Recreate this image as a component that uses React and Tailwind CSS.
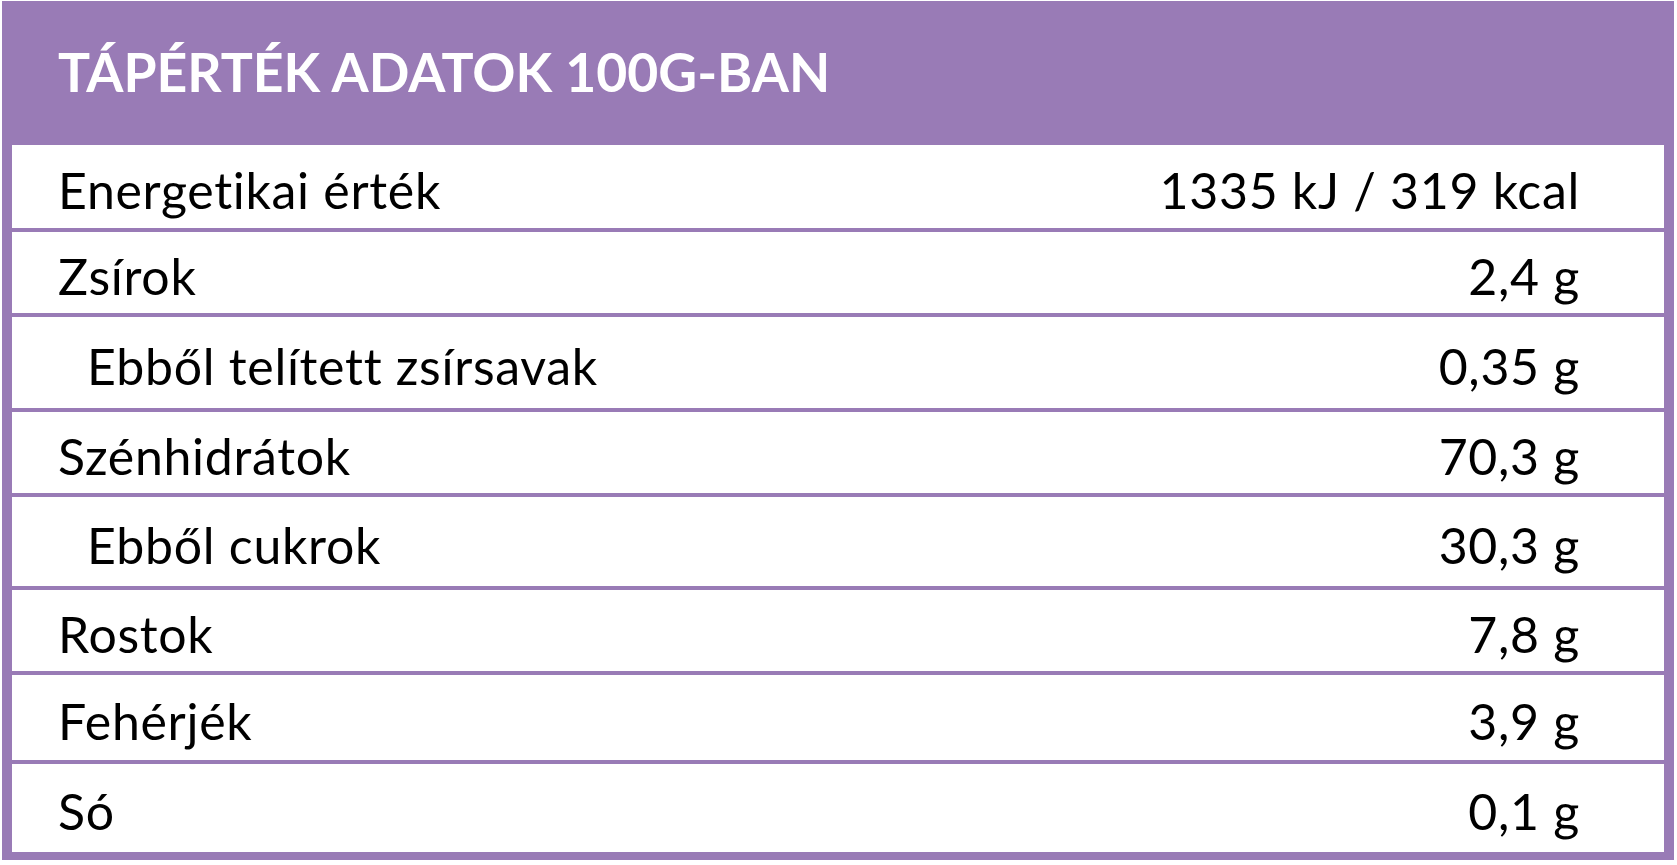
const rows = [
  { label: 'Energetikai érték', value: '1335 kJ / 319 kcal', h: 'h-[83px]' },
  { label: 'Zsírok', value: '2,4 g', h: 'h-[85px] border-t-4' },
  { label: 'Ebből telített zsírsavak', value: '0,35 g', h: 'h-[95px] border-t-4', sub: true },
  { label: 'Szénhidrátok', value: '70,3 g', h: 'h-[85px] border-t-4' },
  { label: 'Ebből cukrok', value: '30,3 g', h: 'h-[93px] border-t-4', sub: true },
  { label: 'Rostok', value: '7,8 g', h: 'h-[85px] border-t-4' },
  { label: 'Fehérjék', value: '3,9 g', h: 'h-[89px] border-t-4' },
  { label: 'Só', value: '0,1 g', h: 'h-[92px] border-t-4' },
];

export default function App() {
  return (
    <div className="w-[1677px] h-[865px] bg-white pt-px pl-[2px] font-['Lato',sans-serif]">
      <div className="w-[1672px] bg-[#997bb6] px-[10px] pb-[8px]">
        <div className="h-[144px] flex items-center pl-[46px] pb-[2px]">
          <h1 className="text-white font-bold text-[53.5px] leading-none">TÁPÉRTÉK ADATOK 100G-BAN</h1>
        </div>
        {rows.map(r => (
          <div key={r.label} className={`${r.h} bg-white border-[#997bb6] flex items-center justify-between pr-[84px] text-black text-[50px] tracking-[0.7px] leading-none ${r.sub ? 'pl-[75px]' : 'pl-[46px]'}`}>
            <span className="pt-[6px]">{r.label}</span>
            <span className="pt-[6px]">{r.value}</span>
          </div>
        ))}
      </div>
    </div>
  );
}
